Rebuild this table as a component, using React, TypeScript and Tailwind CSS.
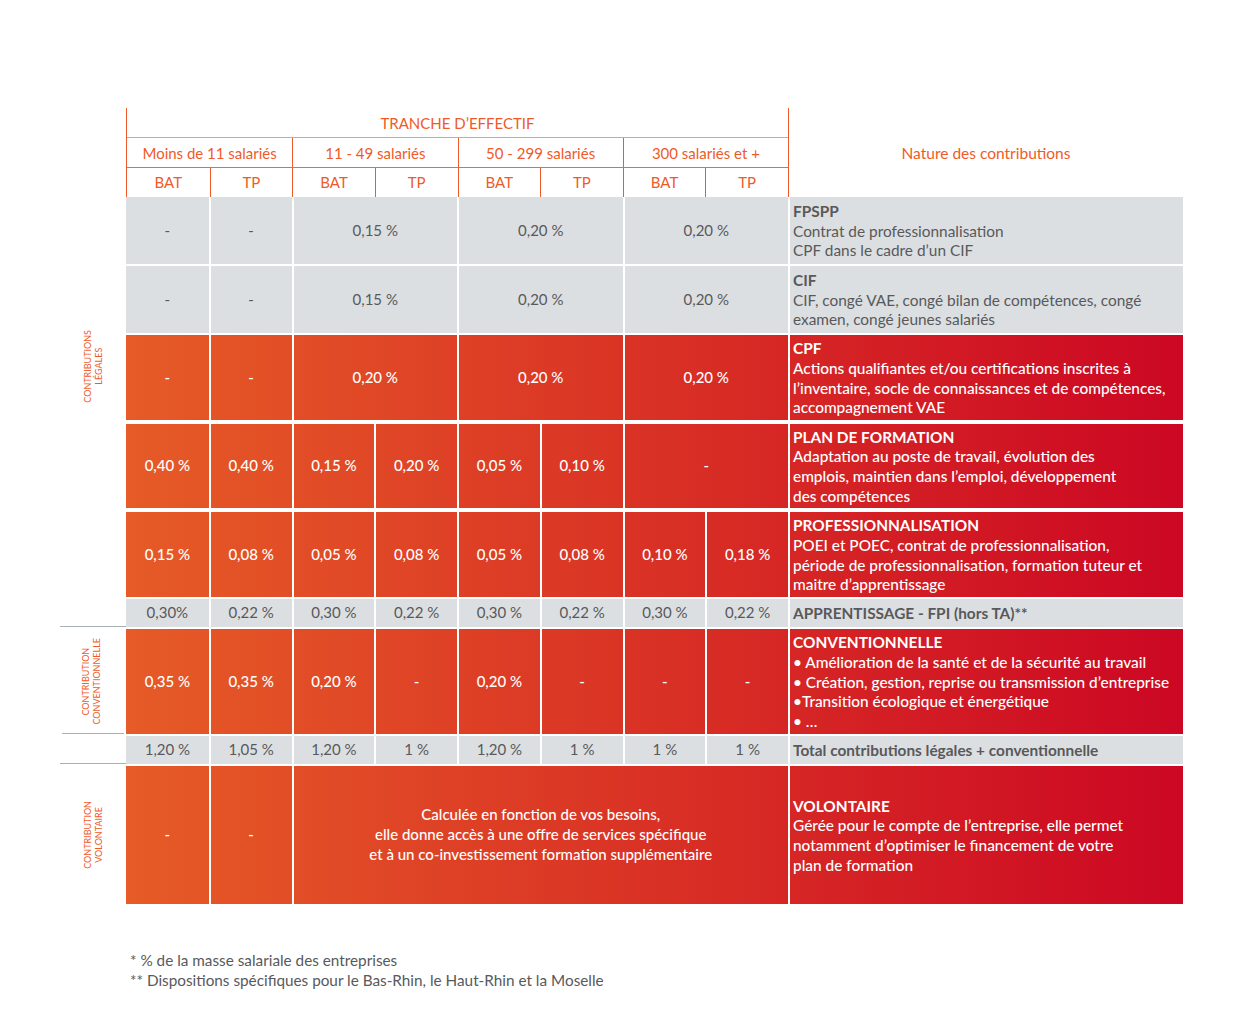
import React from "react";

type Cell = { t: string; s?: 1 | 2 | 6 };
type Row = {
  kind: "gray" | "red";
  cells: Cell[];
  h: string;
  mt?: string;
  nature: React.ReactNode;
};

const spanCls: Record<number, string> = { 1: "", 2: "col-span-2", 6: "col-span-6" };

const rows: Row[] = [
  {
    kind: "gray",
    h: "h-[67px]",
    cells: [{ t: "-" }, { t: "-" }, { t: "0,15 %", s: 2 }, { t: "0,20 %", s: 2 }, { t: "0,20 %", s: 2 }],
    nature: (
      <div>
        <div className="font-bold">FPSPP</div>
        <div>Contrat de professionnalisation</div>
        <div>CPF dans le cadre d’un CIF</div>
      </div>
    ),
  },
  {
    kind: "gray",
    h: "h-[67px]",
    cells: [{ t: "-" }, { t: "-" }, { t: "0,15 %", s: 2 }, { t: "0,20 %", s: 2 }, { t: "0,20 %", s: 2 }],
    nature: (
      <div>
        <div className="font-bold">CIF</div>
        <div>CIF, congé VAE, congé bilan de compétences, congé</div>
        <div>examen, congé jeunes salariés</div>
      </div>
    ),
  },
  {
    kind: "red",
    h: "h-[85px]",
    cells: [{ t: "-" }, { t: "-" }, { t: "0,20 %", s: 2 }, { t: "0,20 %", s: 2 }, { t: "0,20 %", s: 2 }],
    nature: (
      <div>
        <div className="font-bold">CPF</div>
        <div>Actions qualifiantes et/ou certifications inscrites à</div>
        <div>l’inventaire, socle de connaissances et de compétences,</div>
        <div>accompagnement VAE</div>
      </div>
    ),
  },
  {
    kind: "red",
    h: "h-[84px]",
    mt: "mt-[2px]",
    cells: [
      { t: "0,40 %" },
      { t: "0,40 %" },
      { t: "0,15 %" },
      { t: "0,20 %" },
      { t: "0,05 %" },
      { t: "0,10 %" },
      { t: "-", s: 2 },
    ],
    nature: (
      <div>
        <div className="font-bold">PLAN DE FORMATION</div>
        <div>Adaptation au poste de travail, évolution des</div>
        <div>emplois, maintien dans l’emploi, développement</div>
        <div>des compétences</div>
      </div>
    ),
  },
  {
    kind: "red",
    h: "h-[85px]",
    mt: "mt-[2px]",
    cells: [
      { t: "0,15 %" },
      { t: "0,08 %" },
      { t: "0,05 %" },
      { t: "0,08 %" },
      { t: "0,05 %" },
      { t: "0,08 %" },
      { t: "0,10 %" },
      { t: "0,18 %" },
    ],
    nature: (
      <div>
        <div className="font-bold">PROFESSIONNALISATION</div>
        <div>POEI et POEC, contrat de professionnalisation,</div>
        <div>période de professionnalisation, formation tuteur et</div>
        <div>maitre d’apprentissage</div>
      </div>
    ),
  },
  {
    kind: "gray",
    h: "h-[28px]",
    cells: [
      { t: "0,30%" },
      { t: "0,22 %" },
      { t: "0,30 %" },
      { t: "0,22 %" },
      { t: "0,30 %" },
      { t: "0,22 %" },
      { t: "0,30 %" },
      { t: "0,22 %" },
    ],
    nature: <div className="font-bold">APPRENTISSAGE - FPI (hors TA)**</div>,
  },
];

const convRow: Row = {
  kind: "red",
  h: "h-[105px]",
  cells: [
    { t: "0,35 %" },
    { t: "0,35 %" },
    { t: "0,20 %" },
    { t: "-" },
    { t: "0,20 %" },
    { t: "-" },
    { t: "-" },
    { t: "-" },
  ],
  nature: (
    <div>
      <div className="font-bold">CONVENTIONNELLE</div>
      <div>• Amélioration de la santé et de la sécurité au travail</div>
      <div>• Création, gestion, reprise ou transmission d’entreprise</div>
      <div>•Transition écologique et énergétique</div>
      <div>• …</div>
    </div>
  ),
};

const totalRow: Row = {
  kind: "gray",
  h: "h-[28px]",
  cells: [
    { t: "1,20 %" },
    { t: "1,05 %" },
    { t: "1,20 %" },
    { t: "1 %" },
    { t: "1,20 %" },
    { t: "1 %" },
    { t: "1 %" },
    { t: "1 %" },
  ],
  nature: <div className="font-bold">Total contributions légales + conventionnelle</div>,
};

const volRow: Row = {
  kind: "red",
  h: "h-[138px]",
  cells: [
    { t: "-" },
    { t: "-" },
    {
      t: "Calculée en fonction de vos besoins,\nelle donne accès à une offre de services spécifique\net à un co-investissement formation supplémentaire",
      s: 6,
    },
  ],
  nature: (
    <div>
      <div className="font-bold">VOLONTAIRE</div>
      <div>Gérée pour le compte de l’entreprise, elle permet</div>
      <div>notamment d’optimiser le financement de votre</div>
      <div>plan de formation</div>
    </div>
  ),
};

function RowView({ row }: { row: Row }) {
  const bg =
    row.kind === "gray"
      ? "bg-[#dcdfe1] text-[#58595b] font-normal"
      : "bg-[linear-gradient(to_right,#e65b27,#cc0723)] text-white font-medium";
  return (
    <div className={`col-start-2 grid grid-cols-[repeat(8,82.75px)_395px] ${row.h} ${row.mt ?? ""} ${bg}`}>
      {row.cells.map((c, i) => (
        <div
          key={i}
          className={`flex items-center justify-center whitespace-pre-line text-center text-[15px] leading-[19.7px] ${
            i > 0 ? "border-l-2 border-white" : ""
          } ${spanCls[c.s ?? 1]}`}
        >
          {c.t}
        </div>
      ))}
      <div className="flex items-center border-l-2 border-white pl-[3px] pt-[2px] text-[15.4px] leading-[19.7px]">
        {row.nature}
      </div>
    </div>
  );
}

function SideLabel({ children }: { children: React.ReactNode }) {
  return (
    <div className="rotate-180 text-center text-[9px] uppercase leading-[11px] text-[#f05a28] [writing-mode:vertical-rl]">
      {children}
    </div>
  );
}

export default function App() {
  const orange = "text-[#f05a28]";
  return (
    <div className="min-h-[1016px] w-[1252px] bg-white pl-[60px] pt-[108px] font-['Lato',sans-serif]">
      {/* Header */}
      <div className="flex">
        <div className="w-[66px]" />
        <div className="w-[663px] border-x-[1.5px] border-[#ee5a2a]">
          <div className={`flex h-[30px] items-center justify-center border-b border-[#f39a7c] pt-[1px] text-[15px] ${orange}`}>
            TRANCHE D’EFFECTIF
          </div>
          <div className={`grid h-[30px] grid-cols-4 border-b-[1.5px] border-[#ee6a3c] text-[15px] ${orange}`}>
            {["Moins de 11 salariés", "11 - 49 salariés", "50 - 299 salariés", "300 salariés et +"].map((t, i) => (
              <div
                key={t}
                className={`flex items-center justify-center pt-[1px] ${i > 0 ? "border-l-[1.5px] border-[#ee5a2a]" : ""}`}
              >
                {t}
              </div>
            ))}
          </div>
          <div className={`grid h-[29px] grid-cols-8 text-[15px] ${orange}`}>
            {["BAT", "TP", "BAT", "TP", "BAT", "TP", "BAT", "TP"].map((t, i) => (
              <div
                key={i}
                className={`flex items-center justify-center ${i > 0 ? "border-l-[1.5px] border-[#ee5a2a]" : ""}`}
              >
                {t}
              </div>
            ))}
          </div>
        </div>
        <div className={`flex w-[394px] items-center justify-center pt-[2px] text-[15.5px] ${orange}`}>
          Nature des contributions
        </div>
      </div>

      {/* Body */}
      <div className="grid w-[1123px] grid-cols-[66px_1057px] gap-y-[2px]">
        <div className="row-span-6 flex items-center justify-center border-b border-[#a9afb6] pb-[90px]">
          <SideLabel>
            Contributions
            <br />
            Légales
          </SideLabel>
        </div>
        {rows.map((r, i) => (
          <RowView key={i} row={r} />
        ))}
        <div className="mx-[2px] flex items-center justify-center border-b border-[#a9afb6] pr-[4px]">
          <SideLabel>
            Contribution
            <br />
            conventionnelle
          </SideLabel>
        </div>
        <RowView row={convRow} />
        <div className="border-b border-[#a9afb6]" />
        <RowView row={totalRow} />
        <div className="flex items-center justify-center">
          <SideLabel>
            Contribution
            <br />
            volontaire
          </SideLabel>
        </div>
        <RowView row={volRow} />
      </div>

      {/* Footer */}
      <div className="mt-[46px] pl-[70px] text-[15.3px] leading-[20px] text-[#58595b]">
        <div>* % de la masse salariale des entreprises</div>
        <div>** Dispositions spécifiques pour le Bas-Rhin, le Haut-Rhin et la Moselle</div>
      </div>
    </div>
  );
}
